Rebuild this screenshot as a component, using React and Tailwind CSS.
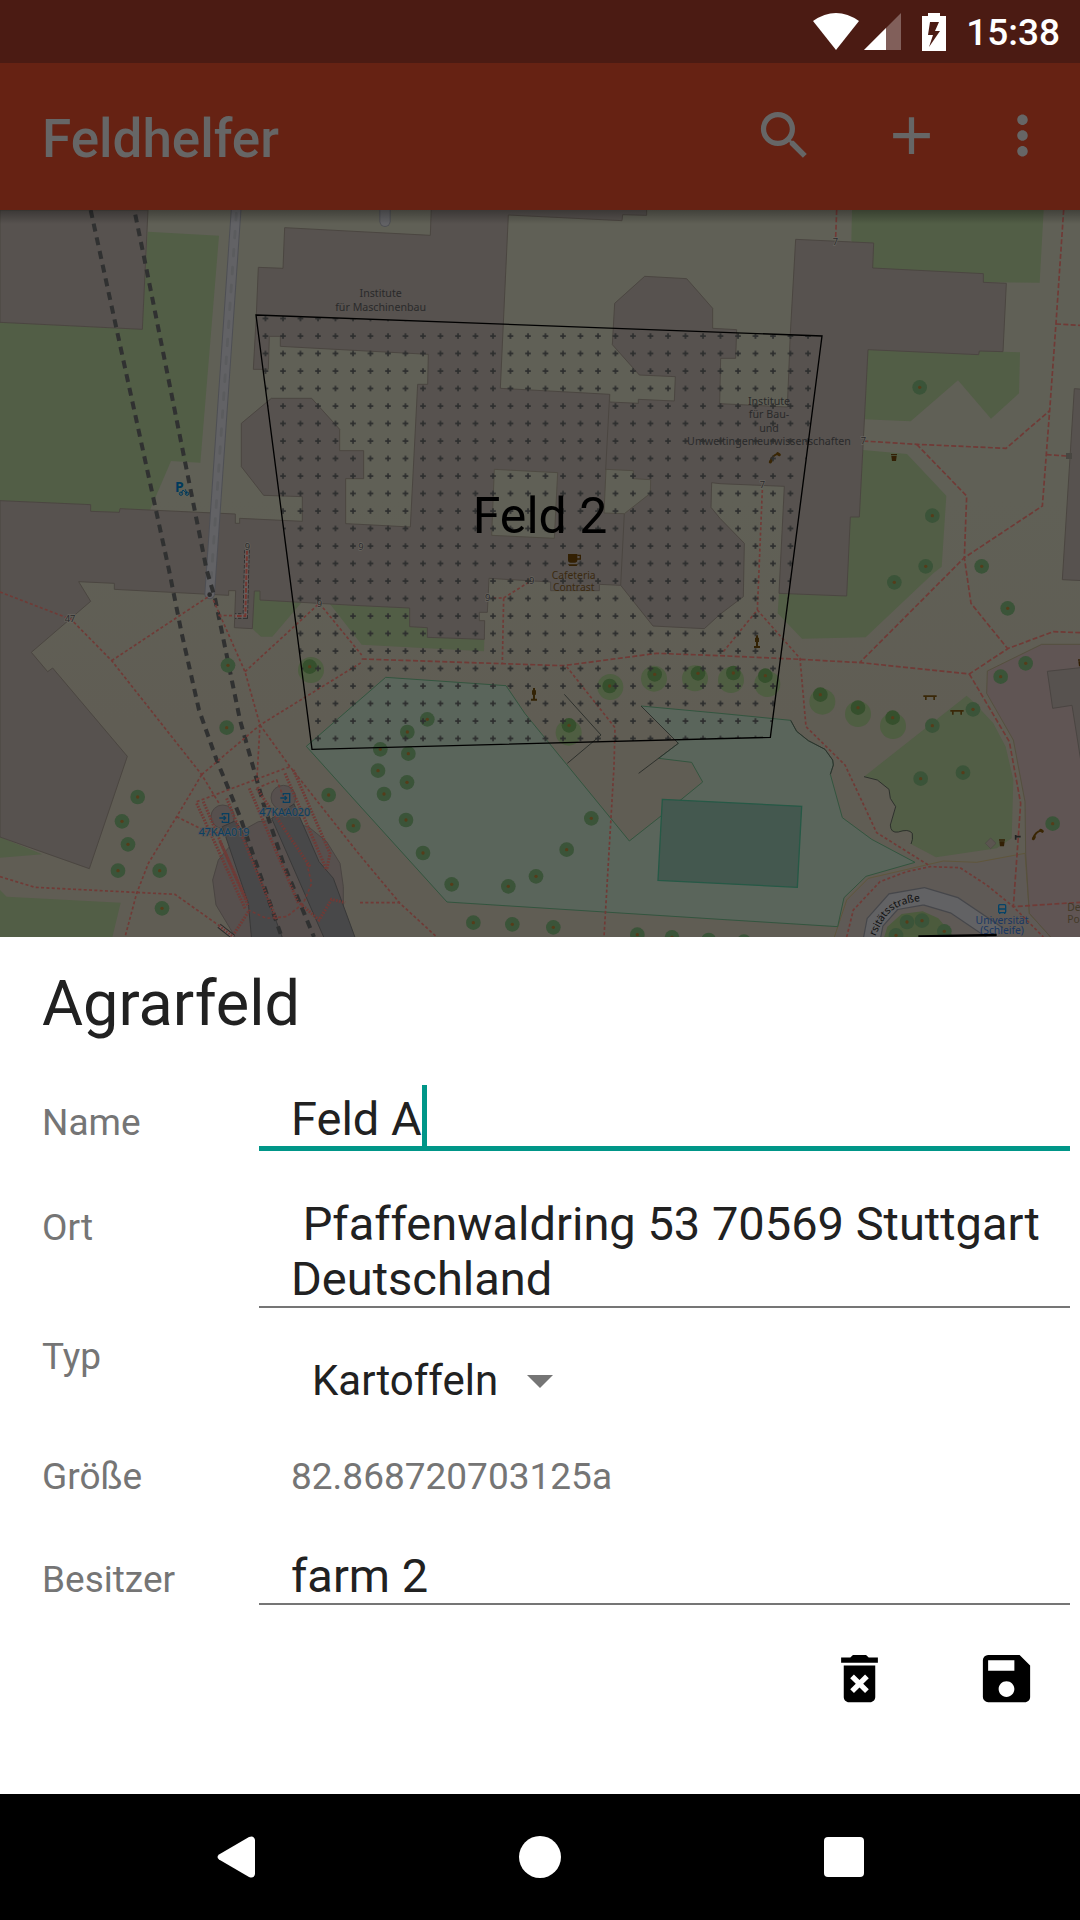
import React from "react";
import { MdSearch, MdAdd, MdMoreVert, MdDeleteForever, MdSave } from "react-icons/md";

// Map geometry, in map units (three per pixel at full width).
const BUILDINGS = [
  "0,30 444,30 427,388 0,367",
  "0,902 272,914 272,934 358,937 360,926 706,942 706,970 719,970 719,955 907,964 907,890 791,886 724,800 724,670 814,595 935,595 1019,688 1019,752 1091,752 1091,836 1037,836 1037,971 1080,973 1231,981 1253,553 1283,553 1285,463 1080,452 841,439 841,409 808,409 805,508 760,508 769,345 775,202 849,205 854,83 1080,95 1291,106 1294,20 1940,20 1940,46 1868,44 1866,62 1525,45 1501,565 1829,583 1829,606 1915,610 1915,598 2023,603 2026,530 1918,525 1837,434 1844,310 1934,229 2060,236 2138,325 2138,385 2210,389 2207,475 2162,475 2159,611 2362,621 2371,400 2387,118 2621,129 2618,204 2950,221 2950,247 3019,250 3009,455 2938,453 2936,464 2604,449 2578,951 2551,951 2540,1188 2337,1180 2353,859 2160,851 2135,848 2133,922 2160,955 2233,1030 2230,1190 2160,1243 2113,1286 1959,1278 1862,1156 1798,1153 1798,1172 1652,1172 1652,1146 1467,1135 1462,1237 1438,1237 1438,1262 1454,1262 1453,1318 1282,1312 1282,1283 1229,1280 1229,1224 1080,1217 780,1200 780,1173 763,1173 757,1286 703,1283 707,1172 686,1172 686,1186 343,1168 343,1150 236,1145 272,1204 94,1357 143,1415 158,1404 382,1669 268,2006 0,1911",
  "3223,566 3250,568 3250,1142 3187,1139",
];

const COURTYARDS = [
  "1483,808 1673,818 1663,1015 1475,1006",
  "1818,808 1900,812 1900,836 1952,839 1951,880 1873,941 1812,939",
];

const GREENS = [
  "443,95 657,107 601,788 513,783 450,930 360,926 358,937 272,934 272,914 0,902 0,367 427,388",
  "2556,30 3131,30 3119,248 2950,247 2618,204 2554,122",
  "2604,449 2936,464 2938,453 3009,455 3060,457 3057,580 2973,656 2874,541 2732,664 2594,658",
  "2589,750 2721,762 2839,887 2825,1100 2800,1120 2597,1312 2406,1316 2333,1240 2337,1180 2540,1188 2551,951 2578,951",
  "763,1173 780,1173 780,1200 905,1207 817,1310 783,1310 757,1286",
  "990,1212 1229,1224 1229,1280 1282,1283 1282,1312 1453,1318 1452,1354 1085,1334",
  "0,1911 127,1963 0,1973",
  "0,2070 20,2090 362,2108 335,2220 0,2220",
  "2592,1730 2900,1487 2920,1505 2980,1570 3017,1640 3040,1740 3035,1915 2990,1945 2808,1972 2733,1932 2735,1900 2725,1892 2690,1897 2675,1893 2671,1880 2687,1820 2671,1795 2667,1768 2632,1740",
];

const SPORTS =
  "919,1639 1157,1432 1518,1457 1575,1541 1888,1923 1983,1848 2108,1746 2075,1687 1976,1675 2035,1630 1923,1518 2160,1540 2372,1561 2390,1594 2425,1622 2475,1648 2498,1680 2500,1695 2491,1723 2527,1853 2615,1918 2745,1987 2598,2029 2532,2093 2513,2180 2160,2158 1341,2106 1080,1818";

const PATHS = [
  "0,1176 213,1258 335,1382 605,1724 660,1815",
  "335,1382 625,1190",
  "640,1200 735,1415 780,1575 770,1750",
  "735,1415 958,1210 1085,1365",
  "605,1724 780,1575 1085,1387",
  "780,1575 870,1700 1075,1960 1200,2110 1320,2220",
  "605,1724 530,1850 445,1990 410,2080 375,2211",
  "0,2030 105,2062 525,2083 690,2200",
  "590,1805 870,1700",
  "530,1850 620,1895",
  "770,1765 830,1740 850,1790",
  "1480,1194 1511,1194 1507,1388",
  "1511,1194 1592,1143",
  "1700,1400 1845,1583 1842,1700 1812,2211",
  "2287,870 2272,1230 2170,1355",
  "2272,1230 2400,1375 2418,1580 2535,1695 2630,1898 2790,1998",
  "2540,2211 2560,2130 2640,2045 2720,2015 2790,2000 2880,2003 2960,2055 3040,2120 3130,2211",
  "655,1246 735,1248",
  "920,1990 935,2050 910,2110 860,2150 800,2155 745,2130",
  "1080,2108 1200,2108",
];

const WIDE_PATHS = [
  "1085,1377 1690,1397 1970,1360 2160,1367 2402,1378 2582,1388 2908,1422 3025,1345 3160,1295 3240,1298",
  "2590,723 2750,733 3018,745 3149,632",
  "2750,733 2900,888 2893,1073 2913,1210 3022,1345",
  "3191,30 3168,370 3149,632 3127,918 2893,1073 2580,1387",
  "3168,372 3240,376",
  "3140,764 3200,768",
  "2510,30 2507,112",
  "2908,1422 3028,1625 3062,1810 3040,2120 3240,2107",
];

const STAIRS = [
  "590,1810 735,2125",
  "610,1805 745,2120",
  "660,1925 740,2100",
  "680,1795 830,2160",
  "748,1765 895,2110",
  "770,1765 930,2000",
  "855,1720 980,2010",
  "880,1710 990,1960 980,2010",
  "900,2110 957,2160 995,2098 1035,2108",
  "745,2135 700,2205",
];

const HALO_TREES = [
  [929, 1400, 933, 1410], [1829, 1458, 1831, 1461], [1964, 1423, 1962, 1436], [2094, 1420, 2085, 1435],
  [1707, 1576, 1706, 1598], [2200, 1419, 2193, 1440], [2296, 1427, 2302, 1452], [2461, 1484, 2467, 1505],
  [2574, 1523, 2574, 1542], [2678, 1553, 2679, 1578],
];

const TREES = [
  [2759, 562], [2797, 947], [2777, 1099], [2945, 1099], [2683, 1147], [3023, 1225], [684, 1396], [680, 1583],
  [413, 1791], [366, 1864], [384, 1933], [354, 2012], [479, 2012], [486, 2125], [986, 1785], [1060, 1877],
  [1282, 1558], [1222, 1596], [1141, 1648], [1225, 1661], [1134, 1712], [1221, 1747], [1152, 1782], [1218, 1860],
  [1269, 1959], [1355, 2053], [1525, 2059], [1608, 2029], [1700, 1949], [1774, 1855], [1420, 2168], [1537, 2173],
  [1660, 2182], [1912, 2204], [2016, 2212], [2126, 2220], [2797, 1577], [2919, 1528], [2762, 1736], [2889, 1718],
  [3002, 1430], [3077, 1390], [3158, 1871], [2721, 2166], [2766, 2162], [2688, 2206], [2833, 2194], [2232, 2225],
];

const LABELS = [
  [1142, 291, "Institute"], [1142, 332, "für Maschinenbau"], [2307, 615, "Institute"], [2307, 655, "für Bau-"],
  [2307, 695, "und"], [2307, 735, "Umweltingenieurwissenschaften"],
];

const NUMBERS = [
  [210, 1266, "47"], [958, 1220, "9"], [742, 1049, "9"], [1083, 1049, "9"], [1595, 1153, "9"], [1463, 1202, "9"],
  [2506, 134, "7"], [2590, 732, "7"], [2287, 865, "7"],
];

function Entrance({ x, y }) {
  return (
    <g transform={`translate(${x} ${y})`} fill="none" stroke="#083f60" strokeWidth="4">
      <path d="M-8-8V-13H11V13H-8V8M-17 0H2M-4-6L2 0L-4 6" />
    </g>
  );
}

function Phone({ x, y }) {
  return (
    <g transform={`translate(${x} ${y})`} stroke="#3a2604" strokeLinecap="round" fill="none">
      <path d="M-12 10Q-8-6 11-12" strokeWidth="6" />
      <path d="M-13 13L-10 8M9-12L14-9" strokeWidth="9" />
    </g>
  );
}

function Bin({ x, y }) {
  return <path transform={`translate(${x} ${y})`} d="M-9-10H9V-6H-9ZM-8-4H8L6 11H-6Z" fill="#332005" />;
}

function Bench({ x, y }) {
  return <path transform={`translate(${x} ${y})`} d="M-20-6H20V-1H15V8H10V-1H-10V8H-15V-1H-20Z" fill="#3a2808" />;
}

function Statue({ x, y }) {
  return <path transform={`translate(${x} ${y})`} d="M-3-20H3V-13H6V0H3V12H9V18H-9V12H-3V0H-6V-13H-3Z" fill="#332305" />;
}

function FieldMap() {
  return (
    <svg viewBox="0 30 3240 2181" className="block w-full" role="img" aria-label="Karte mit Feld 2" fontFamily='"Noto Sans", sans-serif'>
      <defs>
        <linearGradient id="ground" x1="0" y1="0" x2="0" y2="1">
          <stop offset="0.4" stopColor="#606056" />
          <stop offset="0.7" stopColor="#605d54" />
        </linearGradient>
        <linearGradient id="barShadow" x1="0" y1="0" x2="0" y2="1">
          <stop offset="0" stopColor="#000" stopOpacity="0.32" />
          <stop offset="1" stopColor="#000" stopOpacity="0" />
        </linearGradient>
        <pattern id="crosses" x="770" y="329" width="52.5" height="52.5" patternUnits="userSpaceOnUse">
          <path d="M18 26.5H35M26.5 18V35" stroke="#2d2e2e" strokeWidth="5" />
        </pattern>
        <path id="street" d="M2626 2209Q2644 2166 2668 2139Q2704 2104 2800 2100" />
      </defs>
      <rect y="30" width="3240" height="2181" fill="url(#ground)" />

      <polygon points="2500,2220 2540,2100 2605,2035 2830,1983 2930,1987 3075,1960 3088,2140 3160,2220" fill="#5f5a56" stroke="#5f563c" strokeWidth="3" />
      <polygon points="2962,1413 3125,1333 3250,1333 3250,2220 3160,2220 3088,2140 3077,1960 3075,1805 3040,1620 2960,1480" fill="#605554" stroke="#55503f" strokeWidth="3" />
      <polygon points="3142,1414 3250,1402 3250,1730 3216,1516 3158,1525" fill="#57524f" stroke="#4a4542" strokeWidth="3" />

      <g fill="#525e46">{GREENS.map((p) => <polygon key={p} points={p} />)}</g>
      <polygon points={SPORTS} fill="#5a655b" stroke="#33553f" strokeWidth="3" />
      <polygon points="1987,1798 2405,1819 2392,2062 1974,2041" fill="#44584f" stroke="#265946" strokeWidth="4" />
      <g fill="#57524f" stroke="#4b4641" strokeWidth="3">
        {BUILDINGS.map((p) => <polygon key={p} points={p} />)}
        <path d="M1829 583L1817 810M1873 941L1862 1156" />
      </g>
      <g fill="#606056" stroke="#4f4b43" strokeWidth="3">{COURTYARDS.map((p) => <polygon key={p} points={p} />)}</g>

      <g fill="none" stroke="#2e312d" strokeWidth="3">
        <path d="M1923 1518L2035 1630L1916 1720M1693 1483L1803 1605L1702 1690" />
        <path d="M2372 1561L2390 1594L2425 1622L2475 1648L2498 1680L2500 1695L2491 1723" />
        <path d="M2592 1730L2632 1740L2667 1768L2671 1795L2687 1820L2671 1875Q2672 1900 2695 1896Q2725 1885 2737 1900Q2740 1920 2733 1932" />
      </g>

      <path d="M655 1980L638 2040L648 2115L690 2185L710 2220H1030L1030 2060L1020 1990L980 1925L925 1880L825 1860L775 1865L730 1890Z" fill="#57504e" stroke="#4a4542" strokeWidth="3" />
      <circle cx="668" cy="1850" r="35" fill="#57504e" stroke="#4a4542" strokeWidth="3" />
      <circle cx="850" cy="1793" r="37" fill="#57504e" stroke="#4a4542" strokeWidth="3" />
      <path d="M667 1880L705 1863L725 1890L850 2220H755L745 2110Z" fill="#484849" stroke="#393939" strokeWidth="3" />
      <path d="M815 1855L882 1812L957 1985L1000 2035L1068 2220H975Z" fill="#484849" stroke="#393939" strokeWidth="3" />

      <g fill="none" strokeLinecap="round">
        <path d="M709 20L634 1110L629 1182" stroke="#4e4f54" strokeWidth="32" />
        <path d="M709 20L634 1110L629 1182" stroke="#626265" strokeWidth="26" />
        <path d="M709 40L634 1130" stroke="#5b5c5e" strokeWidth="8" strokeDasharray="20 34" />
        <path d="M1155 20V64" stroke="#4e4f54" strokeWidth="34" />
        <path d="M1155 20V64" stroke="#626265" strokeWidth="28" />
      </g>
      <circle cx="629" cy="1184" r="7" fill="#2b2b2b" />

      <path d="M2615 2220L2625 2167L2680 2105L2772 2089L2863 2116L2995 2205" fill="none" stroke="#46474b" strokeWidth="54" />
      <path d="M2615 2220L2625 2167L2680 2105L2772 2089L2863 2116L2995 2205" fill="none" stroke="#626264" strokeWidth="47" />
      <polygon points="2650,2220 2662,2180 2705,2142 2768,2134 2815,2155 2870,2220" fill="#4c5b3d" />

      <g fill="none" stroke="#303131" strokeWidth="12" strokeDasharray="24 18">
        <path d="M272 30L507 1110L545 1300L597 1530L650 1680L720 1850L845 2211" />
        <path d="M403 30L440 210L620 1110L645 1195L720 1560L790 1810L850 1990L942 2211" strokeDashoffset="28" />
      </g>
      <g fill="none" stroke="#703a36" strokeWidth="5">
        <g strokeDasharray="9 7">{PATHS.map((p) => <polyline key={p} points={p} />)}</g>
        <g strokeDasharray="15 7">{WIDE_PATHS.map((p) => <polyline key={p} points={p} />)}</g>
        <g strokeDasharray="5 4" strokeWidth="9">{STAIRS.map((p) => <polyline key={p} points={p} />)}</g>
      </g>
      <path d="M741 1050L736 1248H705" fill="none" stroke="#2b2b2b" strokeWidth="16" strokeDasharray="10 5" />
      <path d="M741 1050L736 1248H705" fill="none" stroke="#68615f" strokeWidth="11" />
      <path d="M741 1050L736 1248H705" fill="none" stroke="#743630" strokeWidth="6" strokeDasharray="14 5" />
      <path d="M657 2177L700 2211" stroke="#2b2b2b" strokeWidth="15" />
      <path d="M657 2177L700 2211" stroke="#6d625e" strokeWidth="9" />
      <path d="M657 2177L700 2211" stroke="#703a36" strokeWidth="7" strokeDasharray="5 4" />

      <g fill="#4f5e42">{HALO_TREES.map(([x, y, hx, hy]) => <circle key={`${x}-${y}`} cx={hx} cy={hy} r="39" />)}</g>
      {[...HALO_TREES, ...TREES].map(([x, y], i) => (
        <g key={`${x}-${y}`}>
          <circle cx={x} cy={y} r="22" fill={i < HALO_TREES.length ? "#36502d" : "#3b5439"} />
          <circle cx={x} cy={y} r="5" fill="#563c1a" />
        </g>
      ))}

      <g fill="#2a2a2b" fontSize="32" textAnchor="middle">
        {LABELS.map(([x, y, t]) => <text key={`${x}-${y}`} x={x} y={y}>{t}</text>)}
        {NUMBERS.map(([x, y, t]) => (
          <text key={`${x}-${y}`} x={x} y={y} fontSize="28" stroke="#68655f" strokeWidth="4" paintOrder="stroke">{t}</text>
        ))}
      </g>
      <g fill="#3b2a10" fontSize="31" textAnchor="middle">
        <text x="1721" y="1137">Cafeteria</text>
        <text x="1721" y="1173">Contrast</text>
      </g>
      <g transform="translate(1704 1062)" fill="#332003">
        <path d="M0 0H28V18Q28 26 20 26H8Q0 26 0 18ZM0 31H30L26 36H4Z" />
        <path d="M28 4H37V15H27" fill="none" stroke="#332003" strokeWidth="4" />
      </g>
      <Phone x={2324} y={773} />
      <Phone x={3113} y={1903} />
      <Bin x={2682} y={772} />
      <Bin x={3006} y={1928} />
      <Bin x={3243} y={1388} />
      <Bench x={2790} y={1492} />
      <Bench x={2871} y={1536} />
      <Statue x={1602} y={1484} />
      <Statue x={2271} y={1326} />
      <path d="M2972 1914L2988 1930L2972 1946L2956 1930Z" fill="#5b5550" stroke="#4d4945" strokeWidth="2" />
      <path d="M3047 1905V1919M3047 1910H3062" stroke="#222" strokeWidth="5" />
      <rect x="3198" y="759" width="18" height="18" fill="#484641" />

      <text x="525" y="877" fontSize="42" fontWeight="700" fill="#003a5c">P</text>
      <g fill="none" stroke="#003a5c" strokeWidth="3">
        <circle cx="543" cy="881" r="5" />
        <circle cx="561" cy="881" r="5" />
        <path d="M543 881L549 870L561 881L556 868" />
      </g>
      <Entrance x={675} y={1854} />
      <Entrance x={858} y={1794} />
      <g fill="#0b3f63" fontSize="32" textAnchor="middle" stroke="#565453" strokeWidth="5" paintOrder="stroke">
        <text x="672" y="1907">47KAA019</text>
        <text x="854" y="1847">47KAA020</text>
      </g>
      <g fill="none" stroke="#064468" strokeWidth="4">
        <rect x="2996" y="2114" width="21" height="24" rx="3" />
        <path d="M2996 2127H3017M2999 2138V2142M3014 2138V2142" />
      </g>
      <g fill="#193763" fontSize="31" textAnchor="middle">
        <text x="3006" y="2173">Universität</text>
        <text x="3006" y="2203">(Schleife)</text>
      </g>
      <g fill="#433a28" fontSize="31">
        <text x="3202" y="2132">De</text>
        <text x="3202" y="2169">Po</text>
      </g>
      <text fontSize="31" fill="#0f0f0f"><textPath href="#street">rsitätsstraße</textPath></text>
      <path d="M2755 2209L2990 2205" stroke="#000" strokeWidth="7" />

      <polygon points="768,345 2466,408 2311,1612 936,1648" fill="url(#crosses)" stroke="#000" strokeWidth="4" />
      <text x="1620" y="998" fontSize="150" fontFamily="Roboto, sans-serif" textAnchor="middle" fill="#000">Feld 2</text>
      <rect y="30" width="3240" height="42" fill="url(#barShadow)" />
    </svg>
  );
}

function StatusBar() {
  return (
    <div className="flex h-[63px] items-center justify-end bg-[#4b1b13] pr-5 text-white">
      <svg viewBox="0 0 46 38" className="h-[38px] w-[46px]" fill="currentColor" aria-hidden="true">
        <path d="M0 8Q23-8 46 8L23 37Z" />
      </svg>
      <svg viewBox="0 0 37 38" className="ml-[5px] h-[38px] w-[37px]" fill="currentColor" aria-hidden="true">
        <path d="M0 37L37 0V37Z" opacity="0.3" />
        <path d="M0 37L22 15V37Z" />
      </svg>
      <svg viewBox="0 0 24 38" className="ml-[21px] h-[38px] w-6" fill="currentColor" fillRule="evenodd" aria-hidden="true">
        <path d="M6 0H18V3H24V38H0V3H6ZM8 9L6 22H11L7 34L18 18H13L17 9Z" />
      </svg>
      <time className="ml-5 pt-0.5 text-[37px] leading-[44px] font-medium">15:38</time>
    </div>
  );
}

function IconButton({ label, className = "", children }) {
  return (
    <button type="button" aria-label={label} className={`size-[63px] shrink-0 ${className}`}>
      {children}
    </button>
  );
}

function AppBar() {
  return (
    <header className="flex h-[147px] items-center bg-[#662213] pr-[26px] pb-0.5 pl-[42px] text-[#666666]">
      <h1 className="flex-1 pt-1.5 text-[53px] leading-[62px] font-medium">Feldhelfer</h1>
      <IconButton label="Suchen"><MdSearch className="size-full" /></IconButton>
      <IconButton label="Hinzufügen" className="ml-16"><MdAdd className="size-full" /></IconButton>
      <IconButton label="Weitere Optionen" className="ml-12"><MdMoreVert className="size-full" /></IconButton>
    </header>
  );
}

function Row({ className = "", children }) {
  return <div className={`grid grid-cols-[217px_1fr] items-start ${className}`}>{children}</div>;
}

const labelText = "text-[37px] leading-[44px] text-[#757575]";
const fieldText = "block w-full resize-none overflow-hidden rounded-none bg-transparent pl-8 text-[47px] leading-[55px] text-[#212121] outline-none";

function FieldSheet() {
  return (
    <main className="flex-1 bg-white pt-[31px] pr-[10px] pl-[42px]">
      <h2 className="mb-[45px] text-[63px] leading-[72px] text-[#212121]">Agrarfeld</h2>
      <form>
        <Row>
          <label htmlFor="name" className={`pt-4 ${labelText}`}>Name</label>
          <div className="relative">
            <input id="name" type="text" defaultValue="Feld A" className={`h-[66px] border-b-[5px] border-[#009688] pt-1.5 ${fieldText}`} />
            <span className="absolute top-0 left-[163px] h-[62px] w-[5px] bg-[#009688]" aria-hidden="true" />
          </div>
        </Row>
        <Row className="mt-[45px]">
          <label htmlFor="ort" className={`pt-[10px] ${labelText}`}>Ort</label>
          <textarea id="ort" rows={2} defaultValue=" Pfaffenwaldring 53 70569 Stuttgart Deutschland" className={`h-[112px] border-b-2 border-[#757575] ${fieldText}`} />
        </Row>
        <Row className="pt-[27px]">
          <label htmlFor="typ" className={labelText}>Typ</label>
          <div className="flex items-center pt-[21px] pl-[53px]">
            <select id="typ" defaultValue="Kartoffeln" className="appearance-none bg-transparent text-[42px] leading-[50px] text-[#212121]">
              <option>Kartoffeln</option>
            </select>
            <svg viewBox="0 0 26 13" className="ml-7 h-[13px] w-[26px]" fill="#757575" aria-hidden="true"><path d="M0 0H26L13 13Z" /></svg>
          </div>
        </Row>
        <Row className="mt-[49px]">
          <span className={labelText}>Größe</span>
          <output aria-label="Größe" className={`pl-8 ${labelText}`}>82.868720703125a</output>
        </Row>
        <Row className="mt-[43px]">
          <label htmlFor="besitzer" className={`pt-4 ${labelText}`}>Besitzer</label>
          <input id="besitzer" type="text" defaultValue="farm 2" className={`h-[63px] border-b-2 border-[#757575] pt-1.5 ${fieldText}`} />
        </Row>
        <div className="mt-[42px] flex justify-end pr-8 pb-[84px] text-black">
          <IconButton label="Löschen"><MdDeleteForever className="size-full" /></IconButton>
          <IconButton label="Speichern" className="ml-[84px]"><MdSave className="size-full" /></IconButton>
        </div>
      </form>
    </main>
  );
}

function NavBar() {
  return (
    <nav className="flex h-[126px] justify-center bg-black text-white">
      <button type="button" aria-label="Zurück" className="flex w-[304px] items-center justify-center">
        <svg viewBox="0 0 38 42" className="h-[42px] w-[38px]" fill="currentColor" aria-hidden="true">
          <path d="M2 18.500L32 1Q37-1 38 4V38Q37 43 32 41L2 23.500Q-1 21 2 18.500Z" />
        </svg>
      </button>
      <button type="button" aria-label="Startseite" className="flex w-[304px] items-center justify-center">
        <span className="size-[42px] rounded-full bg-white" />
      </button>
      <button type="button" aria-label="Übersicht" className="flex w-[304px] items-center justify-center">
        <span className="size-10 rounded-[4px] bg-white" />
      </button>
    </nav>
  );
}

export default function App() {
  return (
    <div className="flex min-h-screen flex-col bg-white font-['Roboto',sans-serif]">
      <StatusBar />
      <AppBar />
      <FieldMap />
      <FieldSheet />
      <NavBar />
    </div>
  );
}
